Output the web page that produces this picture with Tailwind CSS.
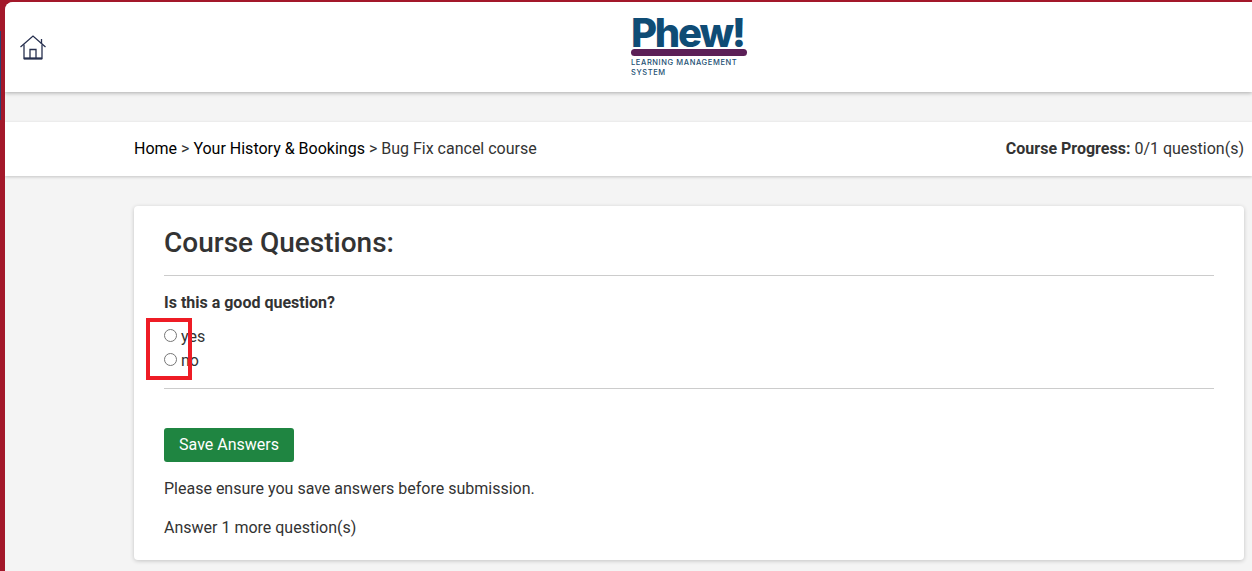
<!DOCTYPE html>
<html lang="en">
  <head>
    <meta charset="UTF-8" />
    <title>Course Questions</title>
    <script src="https://cdn.jsdelivr.net/npm/@tailwindcss/browser@4"></script>
  </head>
  <body class="font-['Roboto',sans-serif] bg-[#f4f4f4] text-[#333333] overflow-hidden">
    <div class="relative h-[571px] overflow-hidden bg-[#a3182a] pl-[5px] pt-[2px]">
      <div class="h-full bg-[#f4f4f4] rounded-tl-[8px] overflow-hidden">
        <!-- top bar -->
        <header class="relative flex items-start h-[90px] pl-[626px] bg-white shadow-[0_1px_4px_rgba(0,0,0,0.3)]">
          <a class="absolute left-[14px] top-[32px]">
            <svg width="28" height="26" viewBox="0 0 28 26" fill="none" stroke="#27304f" stroke-width="1.3">
              <path d="M1.5 13 L14 2 L26.5 13" />
              <path d="M22.5 5 V10" />
              <path d="M5 10.5 V24.5 H23 V10.5" />
              <path d="M11 24.5 V15.5 H17 V24.5" />
              <path d="M5 24.5 H23" stroke-width="2" />
            </svg>
          </a>
          <div class="flex flex-col w-[116px] mt-[15px]">
            <div class="font-['Inter',sans-serif] font-extrabold text-[40px] leading-[32px] tracking-[-2.2px] whitespace-nowrap text-[#0f4c75] h-[32px]">Phew!</div>
            <div class="h-[7px] bg-[#5b1f57] rounded-full"></div>
            <div class="font-['Inter',sans-serif] font-medium text-[7.5px] leading-[10px] mt-[2px] tracking-[0.6px] text-[#1d4f73]">LEARNING MANAGEMENT<br />SYSTEM</div>
          </div>
        </header>

        <!-- breadcrumb bar -->
        <nav class="flex items-center justify-between h-[54px] mt-[30px] pl-[129px] pr-[8px] bg-white shadow-[0_1px_3px_rgba(0,0,0,0.2)] text-[16px]">
          <div><span class="text-black">Home</span> &gt; <span class="text-black">Your History &amp; Bookings</span> &gt; Bug Fix cancel course</div>
          <div><span class="font-bold">Course Progress:</span> 0/1 question(s)</div>
        </nav>

        <!-- questions card -->
        <main class="ml-[129px] mr-[8px] mt-[30px] h-[354px] bg-white rounded-[4px] shadow-[0_1px_4px_rgba(0,0,0,0.2)] px-[30px] pt-[20px]">
          <h2 class="text-[28px] leading-[34px] font-medium">Course Questions:</h2>
          <hr class="mt-[15px] border-[#cccccc]" />
          <p class="mt-[17px] text-[16px] leading-[20px] font-bold">Is this a good question?</p>
          <div class="mt-[12px] text-[16px] leading-[24px]">
            <label class="flex items-center gap-[4px] h-[24px]"><input type="radio" name="answer" class="appearance-none size-[13px] m-0 mb-[4px] rounded-full border border-[#767676] bg-white" />yes</label>
            <label class="flex items-center gap-[4px] h-[24px]"><input type="radio" name="answer" class="appearance-none size-[13px] m-0 mb-[4px] rounded-full border border-[#767676] bg-white" />no</label>
          </div>
          <hr class="mt-[15px] border-[#cccccc]" />
          <button type="button" class="mt-[39px] block w-[130px] h-[34px] bg-[#1f8541] text-white text-[16px] rounded-[3px]">Save Answers</button>
          <p class="mt-[17px] text-[16px] leading-[20px]">Please ensure you save answers before submission.</p>
          <p class="mt-[19px] text-[16px] leading-[20px]">Answer 1 more question(s)</p>
        </main>
      </div>

      <!-- window edge behind the red frame -->
      <div class="absolute left-0 top-[31px] w-[1px] h-[89px] bg-[#2d3f6e]"></div>
      <!-- red annotation box over the radios -->
      <div class="absolute left-[146px] top-[318px] w-[46px] h-[62px] border-[4px] border-[#ee1c25]"></div>
    </div>
  </body>
</html>
